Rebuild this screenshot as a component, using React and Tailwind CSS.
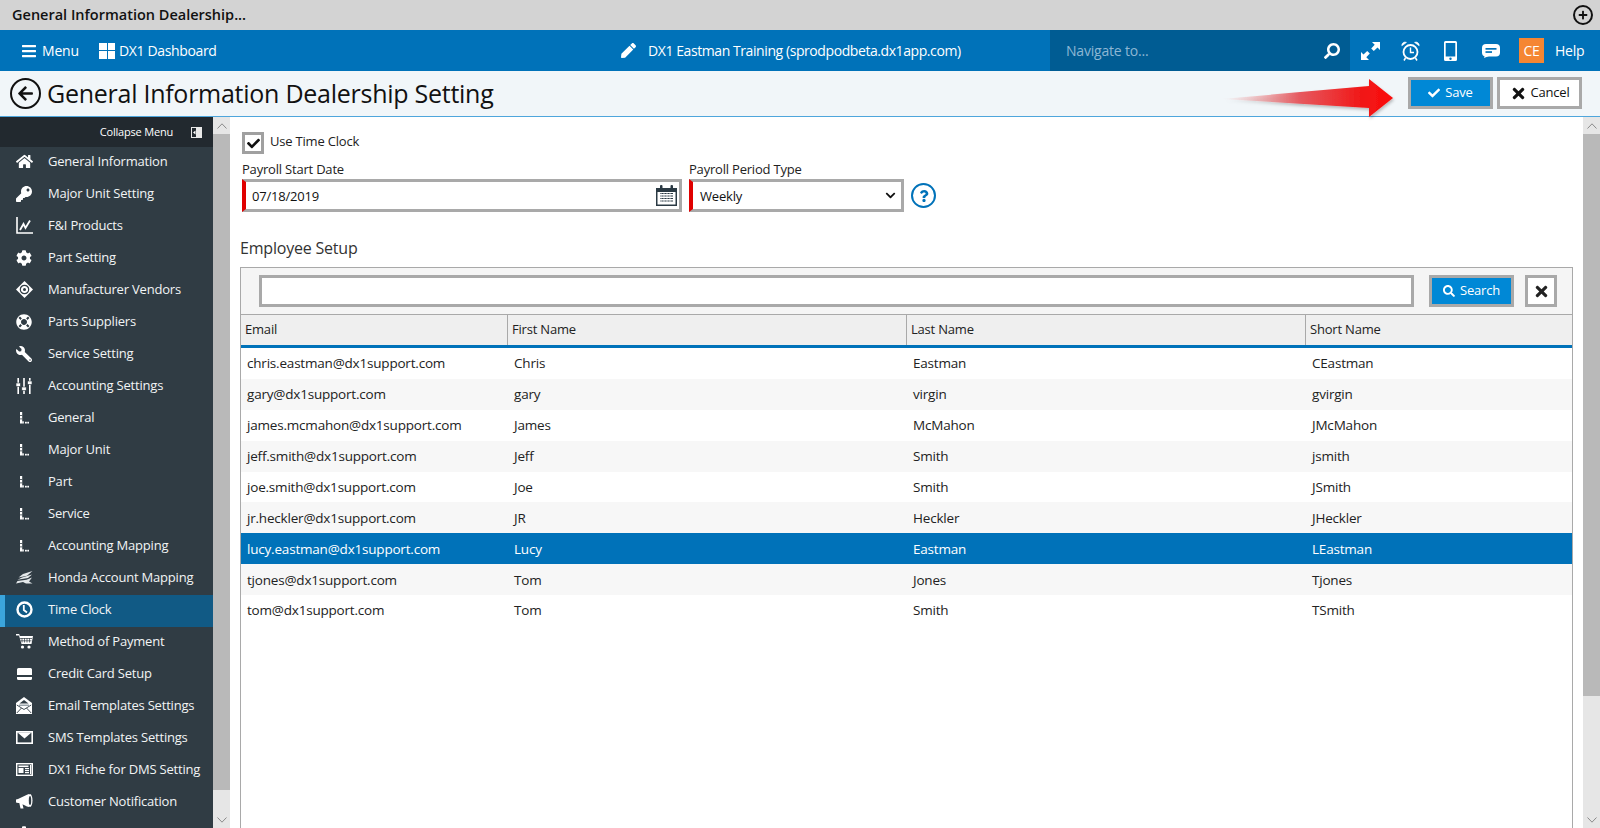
import React from "react";
import {
  FaHome, FaKey, FaCog, FaLifeRing, FaWrench, FaPen, FaSearch,
  FaCheck, FaTimes, FaChevronDown, FaArrowLeft, FaPlus, FaQuestion, FaBars,
} from "react-icons/fa";

const D = "#303c44";
const L = () => (
  <svg width="10" height="12" viewBox="0 0 10 12" fill="#fff">
    <rect x="1" y="0" width="2.200" height="11.500" />
    <rect x="1" y="3" width="2.200" height=".8" fill={D} /><rect x="1" y="6.500" width="2.200" height=".8" fill={D} />
    <rect x="3.200" y="9.300" width="1.600" height="2.200" /><rect x="6" y="9.800" width="1.800" height="1.700" /><rect x="8.300" y="9.800" width="1.700" height="1.700" />
  </svg>
);
const Chart = () => (
  <svg width="17" height="17" viewBox="0 0 17 17" fill="none" stroke="#fff">
    <path d="M1 0V16H17" strokeWidth="1.600" />
    <path d="M4 13 7.500 7 9.500 11 14 3.500" strokeWidth="1.800" />
  </svg>
);
const Sliders = () => (
  <svg width="16" height="16" viewBox="0 0 16 16" fill="#fff">
    <rect x="1.400" y="0" width="1.600" height="16" /><rect x="7.200" y="0" width="1.600" height="16" /><rect x="13" y="0" width="1.600" height="16" />
    <rect x="0" y="5" width="4.400" height="3.400" stroke={D} strokeWidth=".6" /><rect x="5.800" y="9" width="4.400" height="3.400" stroke={D} strokeWidth=".6" /><rect x="11.600" y="3" width="4.400" height="3.400" stroke={D} strokeWidth=".6" />
  </svg>
);
const Diamond = () => (
  <svg width="17" height="17" viewBox="0 0 17 17" fill="none">
    <path d="M8.500 0 17 8.500 8.500 17 0 8.500Z" fill="#fff" />
    <circle cx="8.500" cy="8.500" r="4.200" stroke={D} strokeWidth="1.200" />
    <circle cx="8.500" cy="8.500" r="1.500" fill={D} />
  </svg>
);
const Honda = () => (
  <svg width="17" height="13" viewBox="0 0 17 13" fill="#e4e8ea">
    <path d="M16.500 0 7 3 2.500 6.500 11 4.800Z" /><path d="M16 3.500 6 6.400 1.500 8.800 12 7Z" /><path d="M16 6.500 10.500 8.800 1.500 10 0 12.500 7 11 10 12.500H16.500L13 10.500Z" />
  </svg>
);
const Card = () => (
  <svg width="15" height="12" viewBox="0 0 15 12" fill="#fff">
    <path d="M1.500 0H13.500A1.500 1.500 0 0 1 15 1.500V7H0V1.500A1.500 1.500 0 0 1 1.500 0Z" />
    <path d="M0 9H15V10.500A1.500 1.500 0 0 1 13.500 12H1.500A1.500 1.500 0 0 1 0 10.500Z" />
  </svg>
);
const Clock = () => (
  <svg width="17" height="17" viewBox="0 0 17 17" fill="none" stroke="#fff">
    <circle cx="8.500" cy="8.500" r="7" strokeWidth="2.400" />
    <path d="M7.800 4V9L11 11.500" strokeWidth="1.800" />
  </svg>
);
const Cart = () => (
  <svg width="17" height="15" viewBox="0 0 17 15" fill="#fff">
    <path d="M0 0H3.200L3.800 2H17L15.500 10H5.500L3 1.400H0Z" />
    <path d="M6 4V8.500M8.500 4V8.500M11 4V8.500M13.500 4V8.500M4 4.500H16M4.500 6.800H15.500" stroke={D} strokeWidth=".7" />
    <circle cx="6.500" cy="13" r="1.600" /><circle cx="13" cy="13" r="1.600" />
  </svg>
);
const MailOpen = () => (
  <svg width="16" height="17" viewBox="0 0 16 17" fill="#fff">
    <path d="M8 0 16 6V17H0V6Z" />
    <path d="M3.500 6.500H12.500L8 3Z" fill={D} />
    <path d="M3 7.500H13V9H3Z" fill="#9aa4ab" />
    <path d="M.8 8 8 12.500 15.200 8M.8 16 5.500 11M15.200 16 10.500 11" fill="none" stroke={D} strokeWidth=".9" />
  </svg>
);
const Mail = () => (
  <svg width="17" height="13" viewBox="0 0 17 13" fill="none">
    <rect x=".8" y=".8" width="15.400" height="11.400" stroke="#fff" strokeWidth="1.600" />
    <path d="M1.500 1.500H15.500L8.500 7.500Z" fill="#fff" />
  </svg>
);
const News = () => (
  <svg width="17" height="13" viewBox="0 0 17 13" fill="none">
    <rect x=".7" y=".7" width="15.600" height="11.600" stroke="#fff" strokeWidth="1.400" />
    <rect x="2.500" y="2.500" width="10" height="1.600" fill="#fff" />
    <rect x="2.500" y="5" width="5" height="5" fill="#fff" />
    <rect x="9" y="5" width="4" height="1.200" fill="#fff" /><rect x="9" y="7" width="4" height="1.200" fill="#fff" /><rect x="9" y="9" width="4" height="1.200" fill="#fff" />
    <rect x="14" y="2" width="1.200" height="9" fill="#fff" />
  </svg>
);
const Horn = () => (
  <svg width="17" height="15" viewBox="0 0 17 15" fill="#fff">
    <path d="M0 5.500 2 5 11 .8 13 0V13L11 12.500 6.500 10.300 7.500 14.500H4.500L3.300 9H2L0 8.500Z" />
    <ellipse cx="14" cy="6.500" rx="2.500" ry="6.500" />
    <ellipse cx="14" cy="6.500" rx="1.200" ry="4.600" fill={D} />
  </svg>
);
const Alarm = () => (
  <svg width="19" height="20" viewBox="0 0 19 20" fill="none" stroke="#fff">
    <circle cx="9.500" cy="11" r="7" strokeWidth="1.800" />
    <path d="M9.500 6.500V11.500H13" strokeWidth="1.400" />
    <path d="M.8 4.800A3.300 3.300 0 0 1 5.500 1.400ZM18.200 4.800A3.300 3.300 0 0 0 13.500 1.400Z" fill="#fff" strokeWidth=".6" />
    <path d="M4.500 17 3 19.500M14.500 17 16 19.500" strokeWidth="1.500" />
  </svg>
);
const Expand = () => (
  <svg width="19" height="18" viewBox="0 0 19 18" fill="#fff">
    <path d="M11 0H19V8L16.500 5.500 12.800 9 10.200 6.400 13.700 2.700Z" />
    <path d="M8 18H0V10L2.500 12.500 6.200 9 8.800 11.600 5.300 15.300Z" />
  </svg>
);
const Phone = () => (
  <svg width="13" height="20" viewBox="0 0 13 20" fill="#fff">
    <path fillRule="evenodd" d="M1.500 0H11.500A1.500 1.500 0 0 1 13 1.500V18.500A1.500 1.500 0 0 1 11.500 20H1.500A1.500 1.500 0 0 1 0 18.500V1.500A1.500 1.500 0 0 1 1.500 0ZM1.700 2V15.500H11.300V2Z" />
    <circle cx="6.500" cy="17.700" r="1.200" fill="#0072b9" />
  </svg>
);
const Msg = () => (
  <svg width="18" height="14" viewBox="0 0 18 14" fill="#fff">
    <path d="M4 0H14A4 4 0 0 1 18 4V8.500A4 4 0 0 1 14 12.500H4A4 4 0 0 1 0 8.500V4A4 4 0 0 1 4 0Z" />
    <path d="M3 11 2 14 7 12Z" />
    <rect x="3.500" y="4" width="11" height="1.700" fill="#0072b9" /><rect x="3.500" y="7.200" width="6.500" height="1.700" fill="#0072b9" />
  </svg>
);
const Calendar = () => (
  <svg width="21" height="21" viewBox="0 0 21 21" fill="#2b3a44">
    <path d="M0 3H21V21H0Z" />
    <rect x="4" y="0" width="2.500" height="5" rx="1" /><rect x="14.500" y="0" width="2.500" height="5" rx="1" />
    <rect x="1.500" y="7" width="18" height="12.500" fill="#fff" />
    <path d="M4 8.500H17M4 11H17M4 13.500H17M4 16H17" stroke="#2b3a44" strokeWidth="1.200" />
    <path d="M5 8V18M8 8V18M11 8V18M14 8V18" stroke="#fff" strokeWidth=".7" />
  </svg>
);

const menu = [
  [<FaHome size={17} />, "General Information"],
  [<FaKey size={16} />, "Major Unit Setting"],
  [<Chart />, "F&I Products"],
  [<FaCog size={16} />, "Part Setting"],
  [<Diamond />, "Manufacturer Vendors"],
  [<FaLifeRing size={16} />, "Parts Suppliers"],
  [<FaWrench size={16} className="-scale-x-100" />, "Service Setting"],
  [<Sliders />, "Accounting Settings"],
  [<L />, "General"],
  [<L />, "Major Unit"],
  [<L />, "Part"],
  [<L />, "Service"],
  [<L />, "Accounting Mapping"],
  [<Honda />, "Honda Account Mapping"],
  [<Clock />, "Time Clock", true],
  [<Cart />, "Method of Payment"],
  [<Card />, "Credit Card Setup"],
  [<MailOpen />, "Email Templates Settings"],
  [<Mail />, "SMS Templates Settings"],
  [<News />, "DX1 Fiche for DMS Setting"],
  [<Horn />, "Customer Notification"],
  [<FaCog size={16} />, ""],
];

const rows = [
  ["chris.eastman@dx1support.com", "Chris", "Eastman", "CEastman"],
  ["gary@dx1support.com", "gary", "virgin", "gvirgin"],
  ["james.mcmahon@dx1support.com", "James", "McMahon", "JMcMahon"],
  ["jeff.smith@dx1support.com", "Jeff", "Smith", "jsmith"],
  ["joe.smith@dx1support.com", "Joe", "Smith", "JSmith"],
  ["jr.heckler@dx1support.com", "JR", "Heckler", "JHeckler"],
  ["lucy.eastman@dx1support.com", "Lucy", "Eastman", "LEastman"],
  ["tjones@dx1support.com", "Tom", "Jones", "Tjones"],
  ["tom@dx1support.com", "Tom", "Smith", "TSmith"],
];

const Chevron = ({ up }) => (
  <svg width="10" height="6" viewBox="0 0 10 6" fill="none" stroke="#8a8a8a" strokeWidth="1">
    <path d={up ? "M.5 5.500 5 .8 9.500 5.500" : "M.5 .5 5 5.200 9.500 .5"} />
  </svg>
);

export default function App() {
  return (
    <div className="w-[1600px] h-[828px] overflow-hidden flex flex-col bg-white text-[13px] text-[#222] font-['Open_Sans','Noto_Sans',sans-serif] tracking-[-0.2px]">
      {/* Window tab bar */}
      <div className="h-[30px] shrink-0 bg-[#d3d3d3] flex items-center justify-between pl-3 pr-[7px]">
        <span className="text-[14.5px] font-semibold text-[#111] tracking-[0px]">General Information Dealership...</span>
        <span className="w-5 h-5 rounded-full border-2 border-[#111] flex items-center justify-center text-[#111]"><FaPlus size={10} /></span>
      </div>

      {/* Blue nav */}
      <div className="h-[41px] shrink-0 bg-[#0072b9] flex items-center text-white text-[14px]">
        <div className="w-[621px] flex items-center pl-[21px]">
          <FaBars size={16} />
          <span className="ml-[5px] w-[57px]">Menu</span>
          <span className="grid grid-cols-2 gap-[1px] w-4 h-4">
            <span className="bg-white" /><span className="bg-white" /><span className="bg-white" /><span className="bg-white" />
          </span>
          <span className="ml-[4px] tracking-[-0.36px]">DX1 Dashboard</span>
        </div>
        <div className="w-[429px] flex items-center">
          <FaPen size={15} />
          <span className="ml-[12px] tracking-[-0.42px]">DX1 Eastman Training (sprodpodbeta.dx1app.com)</span>
        </div>
        <div className="w-[300px] h-full bg-[#005c93] flex items-center justify-between pl-4 pr-[10px] text-[#8db7d3]">
          <span>Navigate to...</span>
          <FaSearch size={16} className="text-white -scale-x-100" />
        </div>
        <div className="flex-1 flex items-center pl-[11px]">
          <Expand />
          <span className="ml-[21px] flex"><Alarm /></span>
          <span className="ml-[24px] flex"><Phone /></span>
          <span className="ml-[25px] flex"><Msg /></span>
          <span className="ml-[19px] w-[25px] h-[25px] bg-[#f58633] flex items-center justify-center text-[14px]">CE</span>
          <span className="ml-[11px]">Help</span>
        </div>
      </div>

      {/* Title bar */}
      <div className="relative h-[46px] shrink-0 bg-[#f1f6f9] border-b border-[#4ea6dc] flex items-center pl-[10px] pr-[18px]">
        <span className="w-[31px] h-[31px] rounded-full border-2 border-[#111] flex items-center justify-center text-[#111]"><FaArrowLeft size={17} /></span>
        <h1 className="ml-[6px] text-[25px] text-[#111] tracking-[-0.26px]">General Information Dealership Setting</h1>
        <div className="ml-auto flex gap-1 mt-[-1px]">
          <button className="w-[85px] h-[32px] bg-[#0088d6] border-[3px] border-[#a9a9a9] text-white text-[13px] flex items-center justify-center gap-[5px]"><FaCheck size={12} />Save</button>
          <button className="w-[85px] h-[32px] bg-white border-[3px] border-[#a9a9a9] text-[#111] text-[13px] flex items-center justify-center gap-[4px]"><FaTimes size={17} />Cancel</button>
        </div>
        <svg className="absolute left-[1220px] top-[6px] overflow-visible" width="176" height="42" viewBox="0 0 176 42">
          <defs>
            <linearGradient id="ar" x1="0" x2="1" y1="0" y2="0">
              <stop offset="0" stopColor="#f0a0a0" stopOpacity="0" />
              <stop offset=".45" stopColor="#e65a60" />
              <stop offset=".8" stopColor="#f01a1a" />
              <stop offset="1" stopColor="#fb0a0a" />
            </linearGradient>
            <filter id="sh" x="-5%" y="-20%" width="110%" height="150%"><feDropShadow dx="1" dy="2" stdDeviation="1.500" floodColor="#000" floodOpacity=".25" /></filter>
          </defs>
          <path d="M2 22 149 9V2L173 21 149 40V31Z" fill="url(#ar)" filter="url(#sh)" />
        </svg>
      </div>

      <div className="flex-1 min-h-0 flex">
        {/* Sidebar */}
        <aside className="w-[213px] shrink-0 bg-[#303c44] text-[#f2f4f5] overflow-hidden">
          <div className="h-[30px] bg-[#22292f] flex items-center justify-end pr-[11px] text-[11px] text-white">
            Collapse Menu
            <svg className="ml-[18px]" width="11" height="11" viewBox="0 0 11 11"><rect width="11" height="11" fill="#e8e8e8" /><rect x="1" y="1" width="4" height="9" fill="#22292f" /><path d="M2 5.500 4.500 3.500V7.500Z" fill="#fff" /></svg>
          </div>
          {menu.map(([icon, label, active], i) => (
            <div key={i} className={`relative h-8 flex items-center ${active ? "bg-[#115a85]" : ""}`}>
              {active && <span className="absolute left-0 top-0 bottom-0 w-[5px] bg-[#3ba5dc]" />}
              <span className="w-12 shrink-0 flex items-center justify-center text-white pb-[3px]">{icon}</span>
              <span className="pb-[3px]">{label}</span>
            </div>
          ))}
        </aside>

        {/* Sidebar scrollbar */}
        <div className="w-[17px] shrink-0 bg-[#e6e6e6] flex flex-col">
          <div className="h-[17px] flex items-center justify-center"><Chevron up /></div>
          <div className="h-[656px] bg-[#b9b9b9]" />
          <div className="flex-1 flex items-end justify-center pb-[5px]"><Chevron /></div>
        </div>

        {/* Main */}
        <main className="flex-1 min-w-0 flex flex-col pl-[10px] pr-[10px]">
          <div className="h-[22px] mt-[15px] ml-[2px] flex items-center">
            <span className="w-[22px] h-[22px] border-[3px] border-[#a0a0a0] flex items-center justify-center text-[#111]"><FaCheck size={13} /></span>
            <span className="ml-[6px] pb-[2px]">Use Time Clock</span>
          </div>
          <div className="ml-[2px] mt-[6px] flex items-end">
            <div className="w-[440px]">
              <div className="h-[18px] leading-[18px]">Payroll Start Date</div>
              <div className="h-[33px] border-y-[3px] border-r-[3px] border-[#a9a9a9] border-l-[4px] border-l-[#e00000] flex items-center justify-between pl-[6px] pr-[2px] mt-[1px]">
                <span className="text-[#111] pt-[2px]">07/18/2019</span>
                <Calendar />
              </div>
            </div>
            <div className="w-[215px] ml-[7px]">
              <div className="h-[18px] leading-[18px]">Payroll Period Type</div>
              <div className="h-[33px] border-y-[3px] border-r-[3px] border-[#a9a9a9] border-l-[4px] border-l-[#e00000] flex items-center justify-between pl-[7px] pr-[5px] mt-[1px]">
                <span className="text-[#111] pt-[2px]">Weekly</span>
                <FaChevronDown size={11} className="text-[#111]" />
              </div>
            </div>
            <span className="ml-[7px] mb-[4px] w-[25px] h-[25px] rounded-full border-2 border-[#0072b9] text-[#0072b9] flex items-center justify-center"><FaQuestion size={12} /></span>
          </div>

          <div className="mt-[24px] h-[24px] leading-[24px] text-[16px] text-[#333]">Employee Setup</div>

          {/* Grid */}
          <section className="mt-[7px] flex-1 min-h-0 border border-[#a9a9a9] border-b-0">
            <div className="h-[47px] bg-[#f5f5f5] border-b border-[#a9a9a9] flex items-start pt-[7px] pl-[18px] pr-[15px]">
              <input className="w-[1155px] h-[32px] bg-white border-[3px] border-[#a9a9a9] outline-none" />
              <button className="ml-[15px] w-[85px] h-[32px] bg-[#0088d6] border-[3px] border-[#a9a9a9] text-white flex items-center justify-center gap-[5px]"><FaSearch size={12} />Search</button>
              <button className="ml-[11px] w-[32px] h-[32px] bg-white border-[3px] border-[#a9a9a9] flex items-center justify-center text-[#222]"><FaTimes size={17} /></button>
            </div>
            <div className="h-[33px] bg-[#efefef] border-b-[3px] border-[#0072b9] grid grid-cols-[267px_399px_399px_1fr]">
              {["Email", "First Name", "Last Name", "Short Name"].map((h, i) => (
                <div key={h} className={`flex items-center pl-[4px] ${i < 3 ? "border-r border-[#a9a9a9]" : ""}`}>{h}</div>
              ))}
            </div>
            {rows.map((r, i) => (
              <div key={i} className={`h-[30.9px] grid grid-cols-[267px_399px_399px_1fr] items-center text-[13.5px] ${i === 6 ? "bg-[#0072b9] text-white" : i % 2 ? "bg-[#f7f7f7]" : "bg-white"}`}>
                {r.map((c, j) => <div key={j} className="pl-[6px]">{c}</div>)}
              </div>
            ))}
          </section>
        </main>

        {/* Main scrollbar */}
        <div className="w-[17px] shrink-0 bg-[#e6e6e6] flex flex-col">
          <div className="h-[17px] flex items-center justify-center"><Chevron up /></div>
          <div className="h-[562px] bg-[#b9b9b9]" />
          <div className="flex-1 flex items-end justify-center pb-[5px]"><Chevron /></div>
        </div>
      </div>
    </div>
  );
}
